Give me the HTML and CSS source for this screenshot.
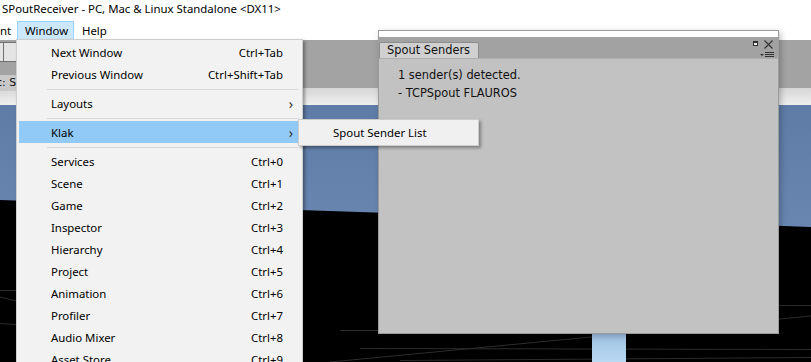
FILE: index.html
```html
<!DOCTYPE html>
<html>
<head>
<meta charset="utf-8">
<link rel="stylesheet" href="styles.css">
</head>
<body>
<div class="app">
  <div class="titlebar">SPoutReceiver - PC, Mac &amp; Linux Standalone &lt;DX11&gt;</div>
  <div class="menubar">
    <span class="mitem cut">nt</span>
    <span class="mitem active">Window</span>
    <span class="mitem">Help</span>
  </div>
  <div class="toolbar">
    <div class="tbtns"><span class="tb"></span><span class="tb"></span></div>
    <div class="tlabel">c: St</div>
  </div>
  <div class="band"></div>
  <div class="scene">
    <svg class="scene-svg" width="811" height="257" viewBox="0 0 811 257">
      <defs>
        <linearGradient id="sky" x1="0" y1="0" x2="0" y2="1">
          <stop offset="0" stop-color="#5f7ca7"/>
          <stop offset="1" stop-color="#7391bb"/>
        </linearGradient>
        <linearGradient id="lb" x1="0" y1="0" x2="0" y2="1">
          <stop offset="0" stop-color="#9fc2e4"/>
          <stop offset="1" stop-color="#b9d8f1"/>
        </linearGradient>
      </defs>
      <rect x="0" y="0" width="811" height="257" fill="url(#sky)"/>
      <polygon points="0,95 811,122 811,257 0,257" fill="#000"/>
      <g stroke="#2c2c2c" stroke-width="1" fill="none">
        <line x1="0" y1="185.5" x2="16" y2="185.5"/>
        <line x1="0" y1="192" x2="16" y2="196"/>
        <line x1="0" y1="218.5" x2="16" y2="219.5"/>
        <line x1="340" y1="225.5" x2="378" y2="225.5"/>
        <line x1="360" y1="243.5" x2="811" y2="244.5"/>
        <line x1="330" y1="257" x2="811" y2="211"/>
        <line x1="779" y1="200.5" x2="811" y2="200.5"/>
        <line x1="400" y1="255.5" x2="811" y2="252.5"/>
      </g>
      <rect x="592" y="229" width="34" height="28" fill="url(#lb)"/>
    </svg>
  </div>

  <div class="uwin">
    <div class="uwin-top"></div>
    <div class="uwin-tabs">
      <div class="utab">Spout Senders</div>
      <div class="uicons">
        <svg width="28" height="21" viewBox="0 0 28 21">
          <rect x="3.5" y="4.5" width="4" height="4" fill="#f2f2f2" stroke="#2e2e2e"/>
          <rect x="3" y="4" width="5" height="2" fill="#2e2e2e"/>
          <path d="M14.5 3.5 L22.5 11.5 M22.5 3.5 L14.5 11.5" stroke="#333" stroke-width="1.1"/>
          <path d="M10 17 L14 17 L12 19 Z" fill="#333"/>
          <path d="M15 15.5 H24 M15 17.5 H24 M15 19.5 H24" stroke="#333" stroke-width="1"/>
        </svg>
      </div>
    </div>
    <div class="uwin-body">
      <div class="uline">1 sender(s) detected.</div>
      <div class="uline">- TCPSpout FLAUROS</div>
    </div>
  </div>

  <div class="dropdown">
    <div class="item"><span>Next Window</span><span class="sc">Ctrl+Tab</span></div>
    <div class="item"><span>Previous Window</span><span class="sc">Ctrl+Shift+Tab</span></div>
    <div class="sep"></div>
    <div class="item"><span>Layouts</span><span class="arrow">&#x203A;</span></div>
    <div class="sep"></div>
    <div class="item hl"><span>Klak</span><span class="arrow">&#x203A;</span></div>
    <div class="sep"></div>
    <div class="item"><span>Services</span><span class="sc">Ctrl+0</span></div>
    <div class="item"><span>Scene</span><span class="sc">Ctrl+1</span></div>
    <div class="item"><span>Game</span><span class="sc">Ctrl+2</span></div>
    <div class="item"><span>Inspector</span><span class="sc">Ctrl+3</span></div>
    <div class="item"><span>Hierarchy</span><span class="sc">Ctrl+4</span></div>
    <div class="item"><span>Project</span><span class="sc">Ctrl+5</span></div>
    <div class="item"><span>Animation</span><span class="sc">Ctrl+6</span></div>
    <div class="item"><span>Profiler</span><span class="sc">Ctrl+7</span></div>
    <div class="item"><span>Audio Mixer</span><span class="sc">Ctrl+8</span></div>
    <div class="item"><span>Asset Store</span><span class="sc">Ctrl+9</span></div>
  </div>

  <div class="submenu">
    <div class="subitem">Spout Sender List</div>
  </div>
</div>
</body>
</html>
```

FILE: styles.css
```css
html, body {
  margin: 0;
  padding: 0;
}
body {
  width: 811px;
  height: 362px;
  overflow: hidden;
  font-family: "Noto Sans", "Open Sans", sans-serif;
}
.app {
  position: relative;
  width: 811px;
  height: 362px;
  overflow: hidden;
  display: flex;
  flex-direction: column;
  background: #000;
}
.titlebar {
  height: 20px;
  flex: none;
  background: #fff;
  color: #000;
  font-size: 11.4px;
  line-height: 17px;
  padding-left: 2px;
  white-space: nowrap;
}
.menubar {
  height: 20px;
  flex: none;
  background: #fff;
  display: flex;
  align-items: stretch;
  font-size: 11.4px;
}
.mitem {
  display: flex;
  align-items: center;
  padding: 0 7px;
  border: 1px solid transparent;
  margin-top: 1px;
  height: 17px;
}
.mitem.cut {
  padding: 0;
  margin-left: -1px;
  width: 16px;
}
.mitem.active {
  background: #cce8ff;
  border-color: #99d1ff;
  width: 41px;
}
.toolbar {
  height: 48px;
  flex: none;
  background: #a3a3a3;
  position: relative;
}
.tbtns {
  display: flex;
  margin-top: 2px;
  margin-left: -10px;
  height: 20px;
}
.tb {
  width: 12px;
  height: 18px;
  background: #e4e4e4;
  border: 1px solid #707070;
  border-right: none;
}
.tb + .tb {
  width: 13px;
  border-right: 1px solid #707070;
}
.tlabel {
  margin-top: 13px;
  margin-left: -4px;
  font-family: "DejaVu Sans", sans-serif;
  font-size: 11px;
  color: #111;
  background: #c8c8c8;
  width: 40px;
  height: 16px;
  line-height: 16px;
  white-space: nowrap;
}
.band {
  height: 17px;
  flex: none;
  background: linear-gradient(#d6d6d6, #efefef);
}
.scene {
  flex: 1;
  position: relative;
}
.scene-svg {
  display: block;
}

/* Windows dropdown */
.dropdown {
  position: absolute;
  left: 16px;
  top: 39px;
  width: 279px;
  padding: 1px 4px 2px 2px;
  background: #f2f2f2;
  border: 1px solid #cccccc;
  box-shadow: 2px 2px 3px rgba(0, 0, 0, 0.35);
  font-size: 11.4px;
  color: #000;
}
.item {
  position: relative;
  height: 22px;
  display: flex;
  align-items: center;
  justify-content: space-between;
  padding: 0 15px 0 32px;
  white-space: nowrap;
}
.item.hl {
  background: #91c9f7;
}
.arrow {
  position: absolute;
  right: 5px;
  top: 2px;
  font-size: 14px;
  color: #333;
}
.sep {
  height: 1px;
  margin: 4px 0 2px 28px;
  background: #d7d7d7;
}
.submenu {
  position: absolute;
  left: 298px;
  top: 119px;
  width: 179px;
  height: 25px;
  background: #f0f0f0;
  border: 1px solid #cccccc;
  box-shadow: 2px 2px 3px rgba(0, 0, 0, 0.35);
  font-size: 11.4px;
}
.subitem {
  padding-left: 34px;
  height: 25px;
  line-height: 25px;
  white-space: nowrap;
}

/* Unity floating window */
.uwin {
  position: absolute;
  left: 378px;
  top: 30px;
  width: 399px;
  height: 302px;
  border: 1px solid #9b9b9b;
  background: #c2c2c2;
  box-shadow: 2px 2px 6px rgba(0, 0, 0, 0.25);
  display: flex;
  flex-direction: column;
  font-family: "DejaVu Sans", sans-serif;
}
.uwin-top {
  height: 6px;
  flex: none;
  background: #fff;
}
.uwin-tabs {
  height: 21px;
  flex: none;
  background: #a2a2a2;
  display: flex;
  align-items: flex-end;
  justify-content: space-between;
}
.utab {
  height: 15px;
  padding: 0 7px;
  width: 84px;
  background: #d0d0d0;
  border: 1px solid #8c8c8c;
  border-bottom: none;
  border-radius: 2px 2px 0 0;
  font-size: 11.4px;
  line-height: 15px;
  color: #111;
  white-space: nowrap;
}
.uicons {
  align-self: flex-start;
  height: 21px;
}
.uicons svg {
  display: block;
}
.uwin-body {
  flex: 1;
  border-top: 1px solid #b0b0b0;
  padding: 7px 0 0 19px;
}
.uline {
  font-size: 11.4px;
  line-height: 18px;
  color: #111;
  white-space: nowrap;
}
```
